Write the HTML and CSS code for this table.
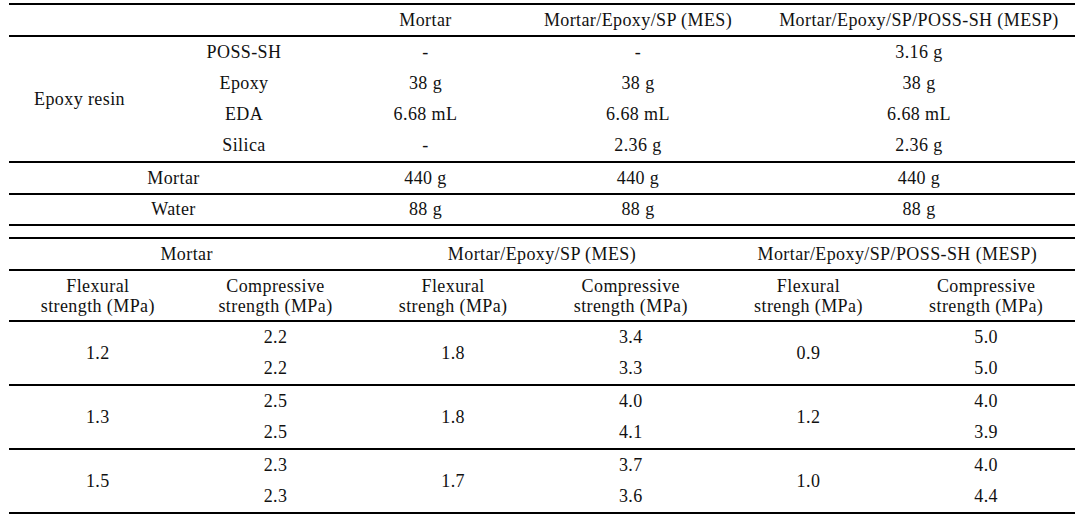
FILE: index.html
```html
<!DOCTYPE html>
<html>
<head>
<meta charset="utf-8">
<link rel="stylesheet" href="styles.css">
</head>
<body>
<div class="page">
  <table class="tbl tbl-mix">
    <colgroup>
      <col class="c1"><col class="c2"><col class="c3"><col class="c4"><col class="c5">
    </colgroup>
    <thead>
      <tr class="h30">
        <th></th><th></th>
        <th>Mortar</th>
        <th>Mortar/Epoxy/SP (MES)</th>
        <th>Mortar/Epoxy/SP/POSS-SH (MESP)</th>
      </tr>
    </thead>
    <tbody>
      <tr class="h31">
        <td rowspan="4" class="rule">Epoxy resin</td>
        <td>POSS-SH</td><td>-</td><td>-</td><td>3.16 g</td>
      </tr>
      <tr class="h31"><td>Epoxy</td><td>38 g</td><td>38 g</td><td>38 g</td></tr>
      <tr class="h31"><td>EDA</td><td>6.68 mL</td><td>6.68 mL</td><td>6.68 mL</td></tr>
      <tr class="h31 end"><td>Silica</td><td>-</td><td>2.36 g</td><td>2.36 g</td></tr>
      <tr class="h30 end"><td colspan="2">Mortar</td><td>440 g</td><td>440 g</td><td>440 g</td></tr>
      <tr class="h29 end"><td colspan="2">Water</td><td>88 g</td><td>88 g</td><td>88 g</td></tr>
    </tbody>
  </table>

  <table class="tbl tbl-str">
    <colgroup>
      <col><col><col><col><col><col>
    </colgroup>
    <thead>
      <tr class="h30">
        <th colspan="2">Mortar</th>
        <th colspan="2">Mortar/Epoxy/SP (MES)</th>
        <th colspan="2">Mortar/Epoxy/SP/POSS-SH (MESP)</th>
      </tr>
      <tr class="sub">
        <th>Flexural<br>strength (MPa)</th>
        <th>Compressive<br>strength (MPa)</th>
        <th>Flexural<br>strengh (MPa)</th>
        <th>Compressive<br>strength (MPa)</th>
        <th>Flexural<br>strengh (MPa)</th>
        <th>Compressive<br>strength (MPa)</th>
      </tr>
    </thead>
    <tbody>
      <tr class="h31">
        <td rowspan="2" class="rule">1.2</td><td>2.2</td>
        <td rowspan="2" class="rule">1.8</td><td>3.4</td>
        <td rowspan="2" class="rule">0.9</td><td>5.0</td>
      </tr>
      <tr class="h31 end"><td>2.2</td><td>3.3</td><td>5.0</td></tr>
      <tr class="h31">
        <td rowspan="2" class="rule">1.3</td><td>2.5</td>
        <td rowspan="2" class="rule">1.8</td><td>4.0</td>
        <td rowspan="2" class="rule">1.2</td><td>4.0</td>
      </tr>
      <tr class="h31 end"><td>2.5</td><td>4.1</td><td>3.9</td></tr>
      <tr class="h31">
        <td rowspan="2" class="rule">1.5</td><td>2.3</td>
        <td rowspan="2" class="rule">1.7</td><td>3.7</td>
        <td rowspan="2" class="rule">1.0</td><td>4.0</td>
      </tr>
      <tr class="h31 end"><td>2.3</td><td>3.6</td><td>4.4</td></tr>
    </tbody>
  </table>
</div>
</body>
</html>
```

FILE: styles.css
```css
html, body {
  margin: 0;
  padding: 0;
  background: #ffffff;
}

.page {
  padding: 3px 0 0 9px;
  font-family: "Liberation Serif", "Times New Roman", serif;
  font-size: 18px;
  letter-spacing: 0.4px;
  color: #111111;
}

.tbl {
  width: 1066px;
  table-layout: fixed;
  border-collapse: separate;
  border-spacing: 0;
  border-top: 2px solid #000;
}

.tbl th,
.tbl td {
  padding: 0;
  text-align: center;
  vertical-align: middle;
  font-weight: normal;
  white-space: nowrap;
}

.tbl thead tr:last-child th {
  border-bottom: 2px solid #000;
}

.tbl-mix .c1 { width: 141px; }
.tbl-mix .c2 { width: 188px; }
.tbl-mix .c3 { width: 175px; }
.tbl-mix .c4 { width: 250px; }
.tbl-mix .c5 { width: 312px; }

.tbl-str {
  margin-top: 11px;
}

.tbl-str thead tr.h30 th {
  border-bottom: 2px solid #000;
}

.h29 > * { height: 29px; line-height: 29px; }
.h30 > * { height: 30px; line-height: 30px; }
.h31 > * { height: 31px; line-height: 31px; }

.sub th {
  line-height: 20px;
  padding: 5px 0 4px;
}

.end > td,
td.rule {
  border-bottom: 2px solid #000;
}
```
